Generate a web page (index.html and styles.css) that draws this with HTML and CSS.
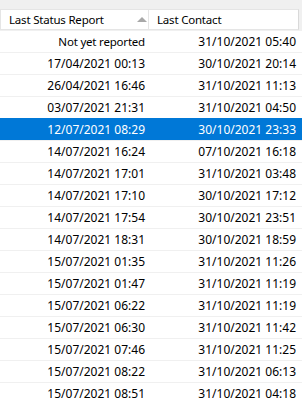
FILE: index.html
```html
<!DOCTYPE html>
<html>
<head>
<meta charset="utf-8">
<link rel="stylesheet" href="styles.css">
</head>
<body>
<div class="grid">
  <div class="head">
    <div class="hcell c1"><span class="txt">Last Status Report</span><span class="sort"></span></div>
    <div class="hcell c2"><span class="txt">Last Contact</span></div>
  </div>
  <div class="rows">
    <div class="row"><div class="cell c1"><span class="txt">Not yet reported</span></div><div class="cell c2">31/10/2021 05:40</div></div>
    <div class="row"><div class="cell c1">17/04/2021 00:13</div><div class="cell c2">30/10/2021 20:14</div></div>
    <div class="row"><div class="cell c1">26/04/2021 16:46</div><div class="cell c2">31/10/2021 11:13</div></div>
    <div class="row"><div class="cell c1">03/07/2021 21:31</div><div class="cell c2">31/10/2021 04:50</div></div>
    <div class="row sel"><div class="cell c1">12/07/2021 08:29</div><div class="cell c2">30/10/2021 23:33</div></div>
    <div class="row"><div class="cell c1">14/07/2021 16:24</div><div class="cell c2">07/10/2021 16:18</div></div>
    <div class="row"><div class="cell c1">14/07/2021 17:01</div><div class="cell c2">31/10/2021 03:48</div></div>
    <div class="row"><div class="cell c1">14/07/2021 17:10</div><div class="cell c2">30/10/2021 17:12</div></div>
    <div class="row"><div class="cell c1">14/07/2021 17:54</div><div class="cell c2">30/10/2021 23:51</div></div>
    <div class="row"><div class="cell c1">14/07/2021 18:31</div><div class="cell c2">30/10/2021 18:59</div></div>
    <div class="row"><div class="cell c1">15/07/2021 01:35</div><div class="cell c2">31/10/2021 11:26</div></div>
    <div class="row"><div class="cell c1">15/07/2021 01:47</div><div class="cell c2">31/10/2021 11:19</div></div>
    <div class="row"><div class="cell c1">15/07/2021 06:22</div><div class="cell c2">31/10/2021 11:19</div></div>
    <div class="row"><div class="cell c1">15/07/2021 06:30</div><div class="cell c2">31/10/2021 11:42</div></div>
    <div class="row"><div class="cell c1">15/07/2021 07:46</div><div class="cell c2">31/10/2021 11:25</div></div>
    <div class="row"><div class="cell c1">15/07/2021 08:22</div><div class="cell c2">31/10/2021 06:13</div></div>
    <div class="row"><div class="cell c1">15/07/2021 08:51</div><div class="cell c2">31/10/2021 04:18</div></div>
  </div>
</div>
</body>
</html>
```
FILE: styles.css
```css
html, body {
  margin: 0;
  padding: 0;
  background: #ffffff;
}
body {
  width: 302px;
  height: 405px;
  overflow: hidden;
  font-family: "Noto Sans", "Open Sans", sans-serif;
  font-size: 12px;
  color: #000;
}
.grid {
  padding-top: 9px;
  background: #f0f0f0;
}
.head {
  display: flex;
  height: 21px;
  box-sizing: border-box;
  margin-right: 3px;
  border-top: 1px solid #e5e5e5;
  border-bottom: 1px solid #e5e5e5;
  border-left: 1px solid #e5e5e5;
  border-right: 1px solid #d9d9d9;
  background: #fff;
}
.hcell {
  display: flex;
  align-items: center;
  justify-content: space-between;
  box-sizing: border-box;
  padding-left: 8px;
  line-height: 19px;
}
.hcell.c1 {
  width: 148px;
  border-right: 1px solid #e5e5e5;
  padding-right: 1px;
}
.hcell.c2 {
  flex: 1;
}
.txt {
  font-size: 11.5px;
  letter-spacing: -0.2px;
}
.sort {
  width: 0;
  height: 0;
  border-left: 5px solid transparent;
  border-right: 5px solid transparent;
  border-bottom: 5px solid #a8a8a8;
  margin-top: -1px;
}
.rows {
  background: #fff;
}
.row {
  display: flex;
  height: 22px;
  box-sizing: border-box;
  border-top: 1px solid #f0f0f0;
}
.cell {
  box-sizing: border-box;
  text-align: right;
  line-height: 21px;
  white-space: nowrap;
}
.cell.c1 {
  width: 149px;
  padding-right: 4px;
}
.cell.c2 {
  width: 149px;
  padding-right: 2px;
}
.row.sel {
  background: #0078d7;
  border-top-color: #0078d7;
  color: #fff;
}
```
